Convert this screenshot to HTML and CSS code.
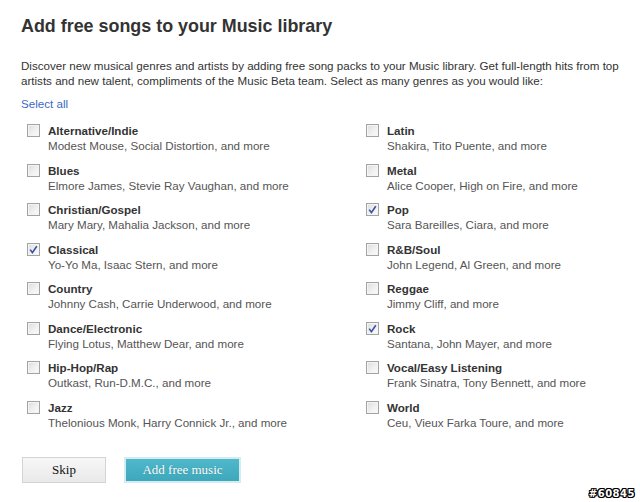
FILE: index.html
```html
<!DOCTYPE html>
<html>
<head>
<meta charset="utf-8">
<link rel="stylesheet" href="styles.css">
</head>
<body>
<div class="page">
  <h1 class="title">Add free songs to your Music library</h1>
  <p class="intro">Discover new musical genres and artists by adding free song packs to your Music library. Get full-length hits from top artists and new talent, compliments of the Music Beta team. Select as many genres as you would like:</p>
  <a class="select-all" href="#">Select all</a>
  <div class="genres">
    <div class="genre"><span class="box"></span><div class="info"><div class="name">Alternative/Indie</div><div class="artists">Modest Mouse, Social Distortion, and more</div></div></div>
    <div class="genre"><span class="box"></span><div class="info"><div class="name">Blues</div><div class="artists">Elmore James, Stevie Ray Vaughan, and more</div></div></div>
    <div class="genre"><span class="box"></span><div class="info"><div class="name">Christian/Gospel</div><div class="artists">Mary Mary, Mahalia Jackson, and more</div></div></div>
    <div class="genre"><span class="box checked"><svg viewBox="0 0 13 13" width="13" height="13"><path d="M3.2 6.6 L5.4 9.6 L9.8 3.2" fill="none" stroke="#3a4fa8" stroke-width="1.6"/></svg></span><div class="info"><div class="name">Classical</div><div class="artists">Yo-Yo Ma, Isaac Stern, and more</div></div></div>
    <div class="genre"><span class="box"></span><div class="info"><div class="name">Country</div><div class="artists">Johnny Cash, Carrie Underwood, and more</div></div></div>
    <div class="genre"><span class="box"></span><div class="info"><div class="name">Dance/Electronic</div><div class="artists">Flying Lotus, Matthew Dear, and more</div></div></div>
    <div class="genre"><span class="box"></span><div class="info"><div class="name">Hip-Hop/Rap</div><div class="artists">Outkast, Run-D.M.C., and more</div></div></div>
    <div class="genre"><span class="box"></span><div class="info"><div class="name">Jazz</div><div class="artists">Thelonious Monk, Harry Connick Jr., and more</div></div></div>
    <div class="genre"><span class="box"></span><div class="info"><div class="name">Latin</div><div class="artists">Shakira, Tito Puente, and more</div></div></div>
    <div class="genre"><span class="box"></span><div class="info"><div class="name">Metal</div><div class="artists">Alice Cooper, High on Fire, and more</div></div></div>
    <div class="genre"><span class="box checked"><svg viewBox="0 0 13 13" width="13" height="13"><path d="M3.2 6.6 L5.4 9.6 L9.8 3.2" fill="none" stroke="#3a4fa8" stroke-width="1.6"/></svg></span><div class="info"><div class="name">Pop</div><div class="artists">Sara Bareilles, Ciara, and more</div></div></div>
    <div class="genre"><span class="box"></span><div class="info"><div class="name">R&amp;B/Soul</div><div class="artists">John Legend, Al Green, and more</div></div></div>
    <div class="genre"><span class="box"></span><div class="info"><div class="name">Reggae</div><div class="artists">Jimmy Cliff, and more</div></div></div>
    <div class="genre"><span class="box checked"><svg viewBox="0 0 13 13" width="13" height="13"><path d="M3.2 6.6 L5.4 9.6 L9.8 3.2" fill="none" stroke="#3a4fa8" stroke-width="1.6"/></svg></span><div class="info"><div class="name">Rock</div><div class="artists">Santana, John Mayer, and more</div></div></div>
    <div class="genre"><span class="box"></span><div class="info"><div class="name">Vocal/Easy Listening</div><div class="artists">Frank Sinatra, Tony Bennett, and more</div></div></div>
    <div class="genre"><span class="box"></span><div class="info"><div class="name">World</div><div class="artists">Ceu, Vieux Farka Toure, and more</div></div></div>
  </div>
  <div class="actions">
    <button class="btn skip">Skip</button>
    <button class="btn add">Add free music</button>
  </div>
</div>
<div class="watermark">#60845</div>
</body>
</html>
```
FILE: styles.css
```css
html, body {
  margin: 0;
  padding: 0;
  background: #fff;
}
body {
  font-family: Arial, "Liberation Sans", sans-serif;
  color: #333;
  width: 640px;
  height: 502px;
  position: relative;
  overflow: hidden;
}
.page {
  padding: 14px 0 0 21px;
}
.title {
  margin: 0;
  font-size: 17.9px;
  line-height: 24px;
  font-weight: bold;
  color: #333;
}
.intro {
  margin: 20px 0 0 0;
  font-size: 11.6px;
  line-height: 15px;
  width: 612px;
  color: #333;
}
.select-all {
  display: block;
  margin-top: 8px;
  font-size: 11.6px;
  line-height: 15px;
  color: #3c68c4;
  text-decoration: none;
  width: max-content;
}
.genres {
  margin: 12px 0 0 6px;
  display: grid;
  grid-template-columns: 339px 230px;
  grid-template-rows: repeat(8, 30px);
  grid-auto-flow: column;
  row-gap: 9.5px;
}
.genre {
  display: flex;
  gap: 8px;
  align-items: flex-start;
}
.box {
  width: 11px;
  height: 11px;
  margin-top: 1px;
  border: 1px solid #a3a3a3;
  background: linear-gradient(135deg, #dcdcdc 0%, #f2f2f2 60%, #fbfbfb 100%);
  box-shadow: inset 0 0 0 1px #f4f4f4;
  position: relative;
  flex: none;
}
.box svg {
  position: absolute;
  left: -1px;
  top: -1px;
}
.info {
  font-size: 11.6px;
  line-height: 15px;
}
.name {
  font-weight: bold;
  color: #333;
}
.artists {
  color: #555;
}
.actions {
  display: flex;
  gap: 18px;
  margin: 27px 0 0 1px;
}
.btn {
  font-family: "Liberation Serif", "Times New Roman", serif;
  font-size: 13px;
  height: 26px;
  padding: 0;
  cursor: pointer;
}
.skip {
  width: 84px;
  color: #111;
  border: 1px solid #d4d4d4;
  background: linear-gradient(#f7f7f7, #e9e9e9);
}
.add {
  width: 117px;
  color: #fff;
  border: 2px solid #d3ecf1;
  background: linear-gradient(#4fb8ca, #3ea7bb);
  text-shadow: 0 0 1px rgba(0,0,0,0.25);
}
.watermark {
  position: absolute;
  right: 5px;
  bottom: 3px;
  font-family: "DejaVu Sans", sans-serif;
  font-weight: bold;
  font-size: 10px;
  color: #fff;
  text-shadow: -1px -1px 0 #000, 1px -1px 0 #000, -1px 1px 0 #000, 1px 1px 0 #000, 0 1px 0 #000, 0 -1px 0 #000, 1px 0 0 #000, -1px 0 0 #000;
  letter-spacing: 0.5px;
}
```
